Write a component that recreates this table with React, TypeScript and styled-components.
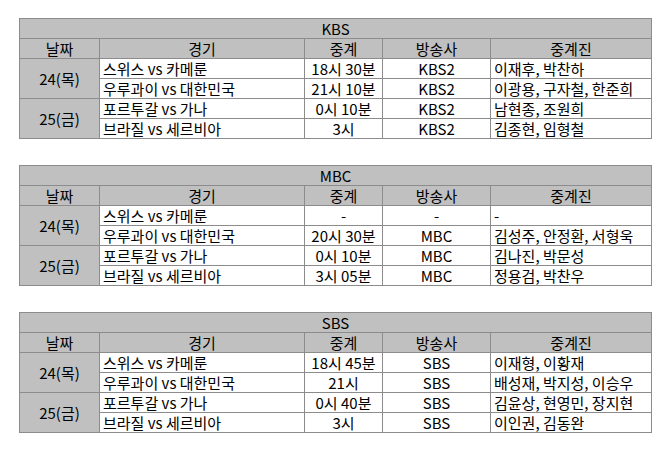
import React from "react";
import styled, { createGlobalStyle } from "styled-components";

const Global = createGlobalStyle`
  html, body { margin: 0; padding: 0; background: #ffffff; }
  body {
    font-family: "Noto Sans CJK KR", "Noto Sans", sans-serif;
    color: #000000;
  }
`;

const Page = styled.div`
  width: 664px;
  height: 466px;
  box-sizing: border-box;
  padding: 18px 0 0 19px;
  display: flex;
  flex-direction: column;
  gap: 26px;
`;

const Table = styled.table`
  border-collapse: collapse;
  table-layout: fixed;
  width: 632px;
  font-family: "Noto Sans CJK KR", "Noto Sans", sans-serif;
  font-size: 15px;
  line-height: 18px;
`;

const Cell = styled.td<{ $align?: "left" | "center"; $gray?: boolean }>`
  border: 1px solid #8c8c8c;
  height: 20px;
  padding: 0 3px;
  box-sizing: border-box;
  white-space: nowrap;
  overflow: hidden;
  font-weight: 400;
  text-align: ${(p) => p.$align ?? "center"};
  vertical-align: middle;
  background: ${(p) => (p.$gray ? "#c0c0c0" : "#ffffff")};
  color: #000000;
`;

const Title = styled(Cell).attrs({ as: "th" })``;

type Match = { game: string; time: string; ch: string; who: string };
type Day = { date: string; matches: Match[] };
type Schedule = { name: string; days: Day[] };

const data: Schedule[] = [
  {
    name: "KBS",
    days: [
      {
        date: "24(목)",
        matches: [
          { game: "스위스 vs 카메룬", time: "18시 30분", ch: "KBS2", who: "이재후, 박찬하" },
          { game: "우루과이 vs 대한민국", time: "21시 10분", ch: "KBS2", who: "이광용, 구자철, 한준희" },
        ],
      },
      {
        date: "25(금)",
        matches: [
          { game: "포르투갈 vs 가나", time: "0시 10분", ch: "KBS2", who: "남현종, 조원희" },
          { game: "브라질 vs 세르비아", time: "3시", ch: "KBS2", who: "김종현, 임형철" },
        ],
      },
    ],
  },
  {
    name: "MBC",
    days: [
      {
        date: "24(목)",
        matches: [
          { game: "스위스 vs 카메룬", time: "-", ch: "-", who: "-" },
          { game: "우루과이 vs 대한민국", time: "20시 30분", ch: "MBC", who: "김성주, 안정환, 서형욱" },
        ],
      },
      {
        date: "25(금)",
        matches: [
          { game: "포르투갈 vs 가나", time: "0시 10분", ch: "MBC", who: "김나진, 박문성" },
          { game: "브라질 vs 세르비아", time: "3시 05분", ch: "MBC", who: "정용검, 박찬우" },
        ],
      },
    ],
  },
  {
    name: "SBS",
    days: [
      {
        date: "24(목)",
        matches: [
          { game: "스위스 vs 카메룬", time: "18시 45분", ch: "SBS", who: "이재형, 이황재" },
          { game: "우루과이 vs 대한민국", time: "21시", ch: "SBS", who: "배성재, 박지성, 이승우" },
        ],
      },
      {
        date: "25(금)",
        matches: [
          { game: "포르투갈 vs 가나", time: "0시 40분", ch: "SBS", who: "김윤상, 현영민, 장지현" },
          { game: "브라질 vs 세르비아", time: "3시", ch: "SBS", who: "이인권, 김동완" },
        ],
      },
    ],
  },
];

const widths = [80, 205, 78, 108, 161];

function ScheduleTable({ s }: { s: Schedule }) {
  return (
    <Table>
      <colgroup>
        {widths.map((w, i) => (
          <col key={i} width={w} />
        ))}
      </colgroup>
      <thead>
        <tr>
          <Title colSpan={5} $gray>
            {s.name}
          </Title>
        </tr>
        <tr>
          <Title $gray>날짜</Title>
          <Title $gray>경기</Title>
          <Title $gray>중계</Title>
          <Title $gray>방송사</Title>
          <Title $gray>중계진</Title>
        </tr>
      </thead>
      <tbody>
        {s.days.map((d) =>
          d.matches.map((m, i) => (
            <tr key={d.date + i}>
              {i === 0 && (
                <Cell rowSpan={d.matches.length} $gray>
                  {d.date}
                </Cell>
              )}
              <Cell $align="left">{m.game}</Cell>
              <Cell>{m.time}</Cell>
              <Cell>{m.ch}</Cell>
              <Cell $align="left">{m.who}</Cell>
            </tr>
          ))
        )}
      </tbody>
    </Table>
  );
}

export default function App() {
  return (
    <>
      <Global />
      <Page>
        {data.map((s) => (
          <ScheduleTable key={s.name} s={s} />
        ))}
      </Page>
    </>
  );
}
